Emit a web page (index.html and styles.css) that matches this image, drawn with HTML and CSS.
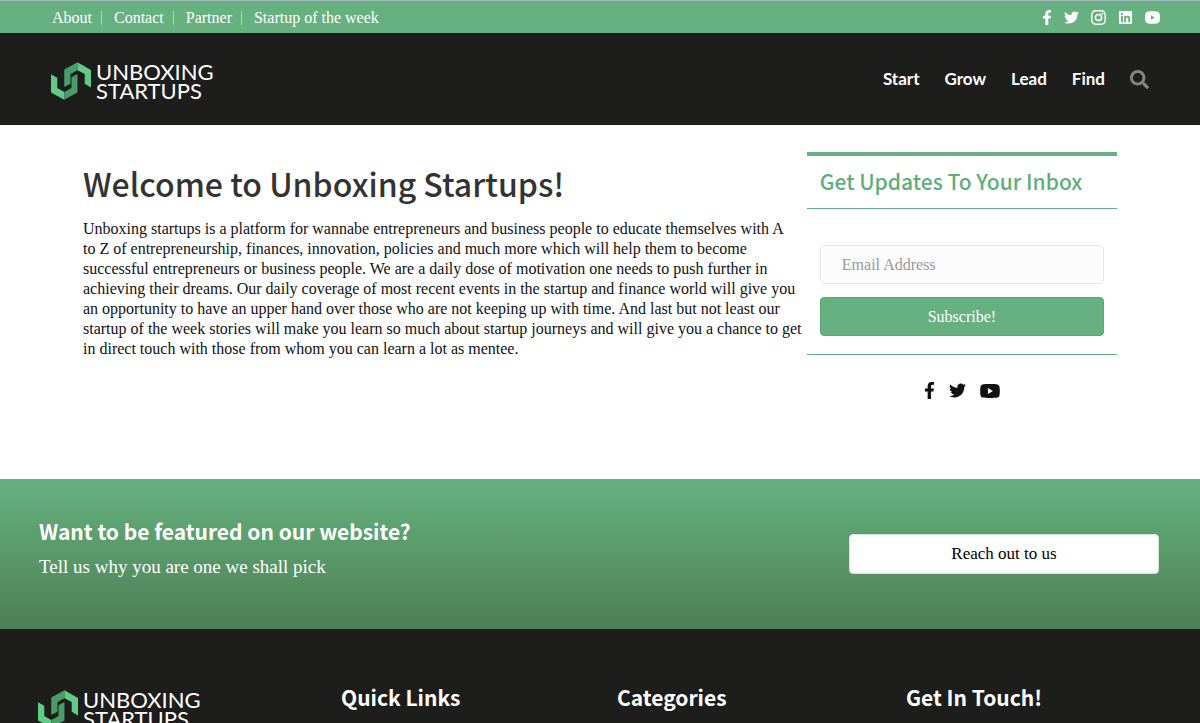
FILE: index.html
```html
<!DOCTYPE html>
<html lang="en">
<head>
  <meta charset="UTF-8">
  <title>Unboxing Startups</title>
  <meta name="viewport" content="width=device-width, initial-scale=1.0">
  <link rel="stylesheet" href="styles.css">
</head>
<body>

  <!-- shared shapes -->
  <svg class="sprite" aria-hidden="true">
    <symbol id="mark" viewBox="33 23 121 113">
      <path fill="#5fcb86" d="M33 59l19 11v31l21 12v23L33 114z"/>
      <path fill="#4a9c68" d="M73 136v-23l22-12V68l18-10v56z"/>
      <path fill="#4a9c68" d="M73 98V45l40-22v24L92 58v30z"/>
      <path fill="#5fcb86" d="M113 23l41 23v53l-19-11V58l-22-11z"/>
    </symbol>
    <symbol id="facebook" viewBox="0 0 320 512">
      <path d="M279.14 288l14.22-92.66h-88.91v-60.13c0-25.35 12.42-50.06 52.24-50.06h40.42V6.26S260.43 0 225.36 0c-73.22 0-121.08 44.38-121.08 124.72v70.62H22.89V288h81.39v224h100.17V288z"/>
    </symbol>
    <symbol id="twitter" viewBox="0 0 512 512">
      <path d="M459.37 151.716c.325 4.548.325 9.097.325 13.645 0 138.72-105.583 298.558-298.558 298.558-59.452 0-114.68-17.219-161.137-47.106 8.447.974 16.568 1.299 25.34 1.299 49.055 0 94.213-16.568 130.274-44.832-46.132-.975-84.792-31.188-98.112-72.772 6.498.974 12.995 1.624 19.818 1.624 9.421 0 18.843-1.3 27.614-3.573-48.081-9.747-84.143-51.98-84.143-102.985v-1.299c13.969 7.797 30.214 12.67 47.431 13.319-28.264-18.843-46.781-51.005-46.781-87.391 0-19.492 5.197-37.36 14.294-52.954 51.655 63.675 129.3 105.258 216.365 109.807-1.624-7.797-2.599-15.918-2.599-24.04 0-57.828 46.782-104.934 104.934-104.934 30.213 0 57.502 12.67 76.67 33.137 23.715-4.548 46.456-13.32 66.599-25.34-7.798 24.366-24.366 44.833-46.132 57.827 21.117-2.273 41.584-8.122 60.426-16.243-14.292 20.791-32.161 39.308-52.628 54.253z"/>
    </symbol>
    <symbol id="instagram" viewBox="0 0 28 28">
      <rect x="1.5" y="1.5" width="25" height="25" rx="7" fill="none" stroke="currentColor" stroke-width="2.6"/>
      <circle cx="14" cy="14" r="5.8" fill="none" stroke="currentColor" stroke-width="2.8"/>
      <circle cx="21.4" cy="6.6" r="1.8"/>
    </symbol>
    <symbol id="linkedin" viewBox="0 0 448 512">
      <path d="M416 32H31.900C14.300 32 0 46.500 0 64.300v383.400C0 465.500 14.300 480 31.900 480H416c17.600 0 32-14.500 32-32.300V64.300c0-17.800-14.400-32.300-32-32.300zM135.400 416H69V202.200h66.500V416zm-33.200-243c-21.300 0-38.500-17.300-38.500-38.500S80.900 96 102.200 96c21.200 0 38.500 17.300 38.500 38.500 0 21.300-17.200 38.500-38.500 38.500zm282.100 243h-66.400V312c0-24.800-.5-56.700-34.500-56.700-34.600 0-39.900 27-39.900 54.900V416h-66.400V202.200h63.700v29.200h.9c8.900-16.800 30.600-34.500 62.900-34.500 67.200 0 79.700 44.300 79.700 101.900V416z"/>
    </symbol>
    <symbol id="youtube" viewBox="0 0 28 20">
      <path fill-rule="evenodd" d="M14 0c5 0 8.600.2 10.600.6 1.600.3 2.600 1.400 2.900 3 .7 4.200.7 8.600 0 12.800-.3 1.600-1.300 2.700-2.900 3-4 .8-17.200.8-21.200 0-1.600-.3-2.600-1.400-2.900-3-.7-4.200-.7-8.600 0-12.800.3-1.600 1.300-2.700 2.900-3C5.400.2 9 0 14 0zM11 5.800v8.400l7.200-4.200z"/>
    </symbol>
    <symbol id="youtube-square" viewBox="0 0 28 24">
      <path fill-rule="evenodd" d="M6 1c4-.8 12-.8 16 0 3.500.7 5 2 5.500 5 .6 4 .6 8 0 12-.5 3-2 4.300-5.500 5-4 .8-12 .8-16 0-3.500-.7-5-2-5.500-5-.6-4-.6-8 0-12C1 3 2.500 1.700 6 1zM11 7.800v8.400l7-4.200z"/>
    </symbol>
    <symbol id="search" viewBox="0 0 512 512">
      <path d="M505 442.700L405.300 343c-4.500-4.500-10.600-7-17-7H372c27.600-35.300 44-79.700 44-128C416 93.100 322.900 0 208 0S0 93.100 0 208s93.100 208 208 208c48.300 0 92.700-16.400 128-44v16.300c0 6.400 2.500 12.500 7 17l99.700 99.700c9.400 9.400 24.600 9.400 33.900 0l28.300-28.300c9.400-9.400 9.400-24.600.1-34zM208 336c-70.700 0-128-57.200-128-128 0-70.700 57.200-128 128-128 70.700 0 128 57.200 128 128 0 70.700-57.200 128-128 128z"/>
    </symbol>
  </svg>

  <div class="topbar">
    <nav class="topbar-links">
      <a href="#">About</a>
      <a href="#">Contact</a>
      <a href="#">Partner</a>
      <a href="#">Startup of the week</a>
    </nav>
    <div class="topbar-social">
      <a href="#" aria-label="Facebook"><svg class="fb"><use href="#facebook"/></svg></a>
      <a href="#" aria-label="Twitter"><svg><use href="#twitter"/></svg></a>
      <a href="#" aria-label="Instagram"><svg><use href="#instagram"/></svg></a>
      <a href="#" aria-label="LinkedIn"><svg><use href="#linkedin"/></svg></a>
      <a href="#" aria-label="YouTube"><svg><use href="#youtube-square"/></svg></a>
    </div>
  </div>

  <header class="header">
    <a class="logo" href="#">
      <svg class="logo-mark"><use href="#mark"/></svg>
      <span>UNBOXING<br>STARTUPS</span>
    </a>
    <nav class="main-nav">
      <a href="#">Start</a>
      <a href="#">Grow</a>
      <a href="#">Lead</a>
      <a href="#">Find</a>
      <button class="search" type="button" aria-label="Search"><svg><use href="#search"/></svg></button>
    </nav>
  </header>

  <main class="main">
    <section class="welcome">
      <h1>Welcome to Unboxing Startups!</h1>
      <p>
        Unboxing startups is a platform for wannabe entrepreneurs and business people to educate themselves with A<br>
        to Z of entrepreneurship, finances, innovation, policies and much more which will help them to become<br>
        successful entrepreneurs or business people. We are a daily dose of motivation one needs to push further in<br>
        achieving their dreams. Our daily coverage of most recent events in the startup and finance world will give you<br>
        an opportunity to have an upper hand over those who are not keeping up with time. And last but not least our<br>
        startup of the week stories will make you learn so much about startup journeys and will give you a chance to get<br>
        in direct touch with those from whom you can learn a lot as mentee.
      </p>
    </section>

    <aside class="sidebar">
      <h2>Get Updates To Your Inbox</h2>
      <form class="subscribe">
        <input type="email" placeholder="Email Address" aria-label="Email Address">
        <button type="button">Subscribe!</button>
      </form>
      <div class="side-social">
        <a href="#" aria-label="Facebook"><svg class="fb"><use href="#facebook"/></svg></a>
        <a href="#" aria-label="Twitter"><svg class="tw"><use href="#twitter"/></svg></a>
        <a href="#" aria-label="YouTube"><svg class="yt"><use href="#youtube"/></svg></a>
      </div>
    </aside>
  </main>

  <section class="cta">
    <div class="cta-text">
      <h2>Want to be featured on our website?</h2>
      <p>Tell us why you are one we shall pick</p>
    </div>
    <button type="button">Reach out to us</button>
  </section>

  <footer class="footer">
    <a class="logo" href="#">
      <svg class="logo-mark"><use href="#mark"/></svg>
      <span>UNBOXING<br>STARTUPS</span>
    </a>
    <h3>Quick Links</h3>
    <h3>Categories</h3>
    <h3>Get In Touch!</h3>
  </footer>

</body>
</html>
```

FILE: styles.css
```css
* {
  box-sizing: border-box;
}

body {
  margin: 0;
  height: 100vh;
  overflow: hidden;
  font-family: "Liberation Serif", Georgia, serif;
  font-size: 16px;
  line-height: 20px;
  color: #111;
  background: #fff;
}

h1, h2, h3, p {
  margin: 0;
}

h1, h2, h3 {
  font-family: "Source Sans Pro", "Noto Sans CJK SC", sans-serif;
}

h2, h3 {
  font-size: 21px;
  line-height: 32px;
}

a {
  color: inherit;
  text-decoration: none;
}

button, input {
  font-family: inherit;
  font-size: 16px;
}

svg {
  display: block;
  fill: currentColor;
}

.sprite {
  display: none;
}

/* top bar */
.topbar {
  display: flex;
  justify-content: space-between;
  align-items: center;
  height: 33px;
  padding: 0 40px 0 52px;
  border-top: 1px solid #a3b8c4;
  background: #66b17f;
  color: #fff;
}

.topbar-links {
  display: flex;
  padding-top: 2px;
}

.topbar-links a {
  line-height: 14px;
  padding-right: 9px;
  margin-right: 12px;
  border-right: 1px solid #a9d3b6;
}

.topbar-links a:last-child {
  border-right: 0;
}

.topbar-social {
  display: flex;
  gap: 12px;
}

.topbar-social svg {
  width: 15px;
  height: 15px;
}

.topbar-social .fb {
  width: 10px;
}

/* header */
.header {
  display: flex;
  justify-content: space-between;
  align-items: center;
  height: 92px;
  padding: 0 51px;
  background: #1d1d1b;
  color: #fff;
}

.logo {
  display: flex;
  align-items: center;
  gap: 5px;
  padding-top: 4px;
  font-family: Lato, sans-serif;
  font-size: 22px;
  line-height: 19px;
  color: #fff;
}

.logo-mark {
  width: 40px;
  height: 38px;
}

.main-nav {
  display: flex;
  align-items: center;
  gap: 25px;
  font-family: Lato, sans-serif;
  font-size: 17px;
  font-weight: bold;
}

.search {
  padding: 0;
  border: 0;
  background: none;
  color: #858585;
}

.search svg {
  width: 19px;
  height: 19px;
}

/* main */
.main {
  display: flex;
  justify-content: space-between;
  min-height: 354px;
  padding: 27px 83px 0;
}

.welcome {
  flex: 1;
  padding-top: 9px;
}

.welcome h1 {
  font-size: 32px;
  font-weight: 500;
  line-height: 44px;
  margin-bottom: 14px;
  color: #333;
}

.sidebar {
  width: 30%;
  max-width: 311px;
  flex-shrink: 0;
}

.sidebar h2 {
  padding: 9px 13px 11px;
  border-top: 4px solid #66b17f;
  border-bottom: 1px solid #66b17f;
  font-weight: 500;
  color: #5fae7a;
}

.subscribe {
  display: flex;
  flex-direction: column;
  gap: 13px;
  padding: 36px 13px 18px;
  border-bottom: 1px solid #66b17f;
}

.subscribe input {
  height: 39px;
  padding: 0 21px;
  border: 1px solid #e6e6e6;
  border-radius: 4px;
  background: #fcfcfc;
}

.subscribe input::placeholder {
  color: #999;
}

.subscribe button {
  height: 39px;
  border: 1px solid #5aa673;
  border-radius: 4px;
  background: #66b17f;
  color: #fff;
}

.side-social {
  display: flex;
  justify-content: center;
  align-items: center;
  gap: 14px;
  padding-top: 27px;
}

.side-social .fb {
  width: 11px;
  height: 17px;
}

.side-social .tw {
  width: 17px;
  height: 17px;
}

.side-social .yt {
  width: 20px;
  height: 14px;
}

/* call to action */
.cta {
  display: flex;
  justify-content: space-between;
  align-items: center;
  height: 150px;
  padding: 0 41px 0 39px;
  background: linear-gradient(#66b17f, #4d8054);
  color: #fff;
}

.cta-text {
  padding-bottom: 16px;
}

.cta h2 {
  margin-bottom: 10px;
}

.cta p {
  font-size: 19px;
}

.cta button {
  width: 310px;
  height: 40px;
  border: 1px solid #d5e6d9;
  border-radius: 4px;
  background: #fff;
  color: #000;
  font-size: 17px;
}

/* footer */
.footer {
  display: grid;
  grid-template-columns: 303px 276px 289px 1fr;
  align-items: start;
  padding: 52px 38px;
  background: #1d1d1b;
  color: #fff;
}

.footer .logo {
  padding-top: 9px;
}
```
